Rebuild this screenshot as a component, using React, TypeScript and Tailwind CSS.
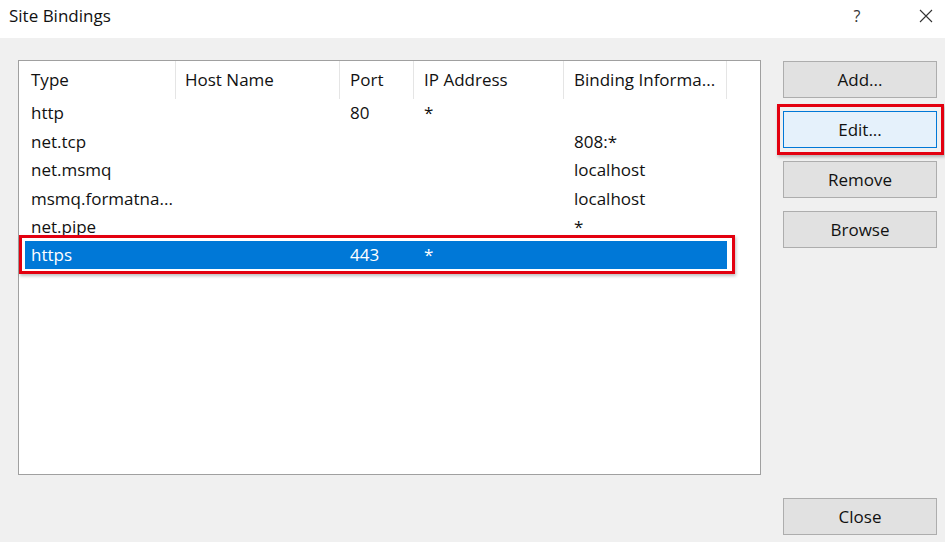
import React from 'react'

type Binding = {
  type: string
  host: string
  port: string
  ip: string
  info: string
}

const bindings: Binding[] = [
  { type: 'http', host: '', port: '80', ip: '*', info: '' },
  { type: 'net.tcp', host: '', port: '', ip: '', info: '808:*' },
  { type: 'net.msmq', host: '', port: '', ip: '', info: 'localhost' },
  { type: 'msmq.formatna...', host: '', port: '', ip: '', info: 'localhost' },
  { type: 'net.pipe', host: '', port: '', ip: '', info: '*' },
  { type: 'https', host: '', port: '443', ip: '*', info: '' },
]

const headers = [
  { label: 'Type', w: 'w-[157px] pl-[12px]' },
  { label: 'Host Name', w: 'w-[164px] pl-[9px]' },
  { label: 'Port', w: 'w-[74px] pl-[10px]' },
  { label: 'IP Address', w: 'w-[150px] pl-[10px]' },
  { label: 'Binding Informa...', w: 'w-[163px] pl-[10px]' },
]

function DialogButton({ label, focused }: { label: string; focused?: boolean }) {
  return (
    <div className="relative">
      <button
        type="button"
        className={
          'w-[154px] h-[37px] text-[17px] text-[#111] border ' +
          (focused ? 'bg-[#e5f1fb] border-[#0078d7]' : 'bg-[#e1e1e1] border-[#adadad]')
        }
      >
        {label}
      </button>
      {focused && (
        <div className="absolute -top-[7px] -left-[6px] -right-[7px] -bottom-[7px] border-[3px] border-[#e3000f] shadow-[1px_2px_3px_rgba(0,0,0,0.25)] pointer-events-none" />
      )}
    </div>
  )
}

export default function App() {
  return (
    <div
      className="w-[945px] h-[542px] flex flex-col bg-[#f0f0f0] overflow-hidden"
      style={{ fontFamily: '"Open Sans", "Noto Sans", sans-serif' }}
    >
      {/* title bar */}
      <div className="h-[38px] bg-white flex items-center justify-between shrink-0">
        <span className="pl-[9px] text-[17px] text-[#111] -mt-[6px]">Site Bindings</span>
        <div className="flex items-center -mt-[6px]">
          <span className="text-[16px] text-[#333] w-[20px] text-center">?</span>
          <svg className="ml-[52px] mr-[12px]" width="14" height="14" viewBox="0 0 14 14" fill="none" stroke="#333" strokeWidth="1.1">
            <path d="M1 1L13 13M13 1L1 13" />
          </svg>
        </div>
      </div>

      {/* body */}
      <div className="flex flex-1 pl-[18px]">
        <div className="mt-[22px] w-[743px] h-[415px] bg-white border border-[#a0a0a0]">
          {/* header */}
          <div className="flex h-[38px] text-[17px] text-[#111]">
            {headers.map((h) => (
              <div key={h.label} className={h.w + ' flex items-center border-r border-[#e5e5e5] whitespace-nowrap'}>
                {h.label}
              </div>
            ))}
          </div>
          {/* rows */}
          <div className="ml-[6px] w-[702px]">
            {bindings.map((b, i) => {
              const selected = i === bindings.length - 1
              return (
                <div
                  key={b.type}
                  className={
                    'relative flex h-[28.4px] items-center text-[17px] whitespace-nowrap ' +
                    (selected ? 'bg-[#0078d7] text-white' : 'text-[#111]')
                  }
                >
                  <div className="w-[151px] pl-[6px]">{b.type}</div>
                  <div className="w-[164px] pl-[9px]">{b.host}</div>
                  <div className="w-[74px] pl-[10px]">{b.port}</div>
                  <div className="w-[150px] pl-[10px]">{b.ip}</div>
                  <div className="w-[163px] pl-[10px]">{b.info}</div>
                  {selected && (
                    <div className="absolute -top-[6px] -left-[6px] -right-[8px] -bottom-[5px] border-[3px] border-[#e3000f] shadow-[1px_2px_3px_rgba(0,0,0,0.25)] pointer-events-none" />
                  )}
                </div>
              )
            })}
          </div>
        </div>

        <div className="ml-[22px] flex flex-col justify-between pt-[23px] pb-[7px]">
          <div className="flex flex-col gap-[13px]">
            <DialogButton label="Add..." />
            <DialogButton label="Edit..." focused />
            <DialogButton label="Remove" />
            <DialogButton label="Browse" />
          </div>
          <DialogButton label="Close" />
        </div>
      </div>
    </div>
  )
}
